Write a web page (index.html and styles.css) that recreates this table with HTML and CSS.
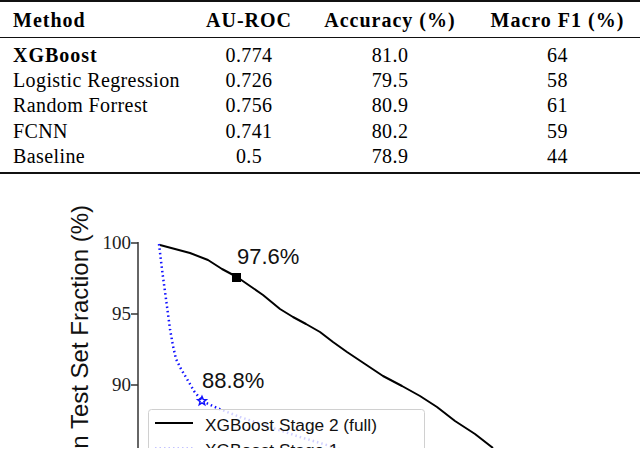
FILE: index.html
```html
<!DOCTYPE html>
<html>
<head>
<meta charset="utf-8">
<link rel="stylesheet" href="styles.css">
</head>
<body>
<div class="page">
  <table class="results">
    <thead>
      <tr>
        <th class="method">Method</th>
        <th class="auroc">AU-ROC</th>
        <th class="acc">Accuracy (%)</th>
        <th class="f1">Macro F1 (%)</th>
      </tr>
    </thead>
    <tbody>
      <tr><td class="method best">XGBoost</td><td class="auroc">0.774</td><td class="acc">81.0</td><td class="f1">64</td></tr>
      <tr><td class="method">Logistic Regression</td><td class="auroc">0.726</td><td class="acc">79.5</td><td class="f1">58</td></tr>
      <tr><td class="method">Random Forrest</td><td class="auroc">0.756</td><td class="acc">80.9</td><td class="f1">61</td></tr>
      <tr><td class="method">FCNN</td><td class="auroc">0.741</td><td class="acc">80.2</td><td class="f1">59</td></tr>
      <tr><td class="method">Baseline</td><td class="auroc">0.5</td><td class="acc">78.9</td><td class="f1">44</td></tr>
    </tbody>
  </table>

  <svg class="chart" width="640" height="273" viewBox="0 176 640 273" xmlns="http://www.w3.org/2000/svg">
    <text class="ylabel" transform="translate(88 206) rotate(-90)" text-anchor="end">Prediction on Test Set Fraction (%)</text>

    <line x1="138" y1="243" x2="138" y2="460" class="axis"/>
    <line x1="131" y1="244" x2="138" y2="244" class="axis"/>
    <line x1="131" y1="315" x2="138" y2="315" class="axis"/>
    <line x1="131" y1="386" x2="138" y2="386" class="axis"/>
    <text class="tick" x="131" y="250" text-anchor="end">100</text>
    <text class="tick" x="131" y="321" text-anchor="end">95</text>
    <text class="tick" x="131" y="392" text-anchor="end">90</text>

    <polyline class="stage1" points="159,245 161,262 163,278 166,300 170,330 173,347 176,360 181,370 187,380 194,392 202,402 217,409 240,418 270,428 300,438 330,447 345,452"/>

    <polyline class="stage2" points="160,246 175,250 190,254 208,261 222,270 237,278 250,287 263,296 280,310 293,318 306,325 320,333 333,343 347,353 365,365 383,377 402,387 420,397 437,408 455,422 475,435 493,449"/>
    <rect x="232" y="274" width="9" height="9" class="marker-sq"/>
    <polygon class="marker-star" points="202,397.5 203.2,400.4 206.3,400.6 203.9,402.6 204.7,405.6 202,403.9 199.3,405.6 200.1,402.6 197.7,400.6 200.8,400.4"/>

    <text class="annot" x="237" y="265">97.6%</text>
    <text class="annot" x="202" y="389">88.8%</text>

    <rect x="148.5" y="410.5" width="276" height="80" rx="3" class="legend"/>
    <line x1="155" y1="424" x2="193" y2="424" class="stage2"/>
    <text class="legtext" x="205" y="432">XGBoost Stage 2 (full)</text>
    <line x1="155" y1="450" x2="193" y2="450" class="stage1"/>
    <text class="legtext" x="205" y="457">XGBoost Stage 1</text>
  </svg>
</div>
</body>
</html>
```

FILE: styles.css
```css
html, body {
  margin: 0;
  padding: 0;
  background: #ffffff;
}

.page {
  width: 640px;
  height: 449px;
  overflow: hidden;
}

.results {
  border-collapse: collapse;
  width: 640px;
  font-family: "Liberation Serif", "DejaVu Serif", serif;
  font-size: 20px;
  letter-spacing: 0.4px;
  color: #000;
  border-top: 2px solid #111;
  border-bottom: 2px solid #111;
}

.results thead th {
  font-weight: bold;
  letter-spacing: 1px;
  height: 34px;
  padding: 0;
  padding-top: 1px;
  border-bottom: 1.5px solid #111;
  line-height: 1;
  vertical-align: middle;
}

.results tbody tr:first-child td {
  padding-top: 4px;
}

.results tbody tr:last-child td {
  padding-bottom: 4px;
}

.results td {
  height: 25.3px;
  padding: 0;
  line-height: 1;
  vertical-align: middle;
}

.results .method {
  width: 180px;
  text-align: left;
  padding-left: 13px;
}

.results .best {
  font-weight: bold;
  letter-spacing: 1px;
}

.results .auroc {
  width: 112px;
  text-align: center;
}

.results .acc {
  width: 170px;
  text-align: center;
}

.results .f1 {
  text-align: center;
}

.chart {
  display: block;
  margin-top: 1px;
}

.ylabel {
  font-family: "Liberation Sans", Arial, sans-serif;
  font-size: 24px;
  fill: #111;
}

.tick {
  font-family: "Liberation Serif", "DejaVu Serif", serif;
  font-size: 19px;
  fill: #222;
}

.axis {
  stroke: #333;
  stroke-width: 1.5;
}

.stage2 {
  fill: none;
  stroke: #000;
  stroke-width: 2;
  stroke-linejoin: round;
}

.stage1 {
  fill: none;
  stroke: #1010ff;
  stroke-width: 2.5;
  stroke-dasharray: 1.5 3;
}

.marker-sq {
  fill: #000;
}

.marker-star {
  fill: #fff;
  stroke: #1010ff;
  stroke-width: 1.5;
}

.annot {
  font-family: "Liberation Sans", Arial, sans-serif;
  font-size: 22px;
  fill: #111;
}

.legend {
  fill: rgba(255, 255, 255, 0.8);
  stroke: #d0d0d0;
  stroke-width: 1;
}

.legtext {
  font-family: "Liberation Sans", Arial, sans-serif;
  font-size: 17.3px;
  fill: #111;
}
```
